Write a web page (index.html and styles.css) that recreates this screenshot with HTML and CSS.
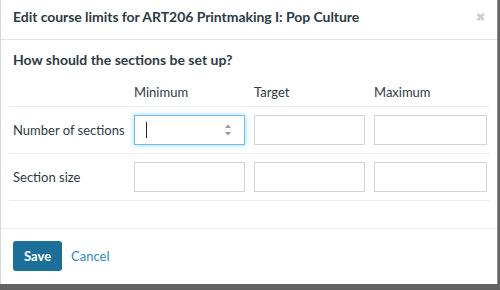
FILE: index.html
```html
<!DOCTYPE html>
<html lang="en">
<head>
    <meta charset="UTF-8">
    <meta name="viewport" content="width=device-width, initial-scale=1.0">
    <title>Edit course limits</title>
    <link rel="stylesheet" href="styles.css">
</head>
<body>
    <div class="modal">
        <div class="modal-header">
            <h2 class="modal-title">Edit course limits for ART206 Printmaking I: Pop Culture</h2>
            <span class="close">&#10006;</span>
        </div>
        <div class="modal-body">
            <h3 class="question">How should the sections be set up?</h3>
            <table class="limits">
                <thead>
                    <tr>
                        <th class="label-col"></th>
                        <th>Minimum</th>
                        <th>Target</th>
                        <th class="last">Maximum</th>
                    </tr>
                </thead>
                <tbody>
                    <tr>
                        <td class="label-col">Number of sections</td>
                        <td>
                            <div class="field focused">
                                <span class="caret"></span>
                                <svg class="spinner" viewBox="0 0 8 14" xmlns="http://www.w3.org/2000/svg">
                                    <path d="M1 5 L4 1.5 L7 5 Z"/>
                                    <path d="M1 9 L4 12.5 L7 9 Z"/>
                                </svg>
                            </div>
                        </td>
                        <td><div class="field"></div></td>
                        <td class="last"><div class="field"></div></td>
                    </tr>
                    <tr>
                        <td class="label-col">Section size</td>
                        <td><div class="field"></div></td>
                        <td><div class="field"></div></td>
                        <td class="last"><div class="field"></div></td>
                    </tr>
                </tbody>
            </table>
        </div>
        <div class="modal-footer">
            <button class="btn-save">Save</button>
            <a href="#" class="btn-cancel">Cancel</a>
        </div>
    </div>
</body>
</html>
```

FILE: styles.css
```css
body {
    margin: 0;
    font-family: 'Lato', 'Liberation Sans', sans-serif;
    background: #636363;
    color: #2d3b45;
    height: 290px;
}
.modal {
    width: 498px;
    height: 284px;
    background: #ffffff;
    border-left: 1px solid #d6d6d6;
    border-right: 1px solid #8e8e8e;
    box-sizing: border-box;
    display: flex;
    flex-direction: column;
}
.modal-header {
    display: flex;
    align-items: flex-start;
    justify-content: space-between;
    padding: 7px 12px 12px 12px;
    border-bottom: 1px solid #e2e2e2;
}
.modal-title {
    margin: 0;
    font-size: 14px;
    line-height: 20px;
    font-weight: 700;
    color: #2d3b45;
    letter-spacing: -0.05px;
}
.close {
    font-size: 11px;
    line-height: 20px;
    color: #cfcfcf;
    font-weight: 700;
}
.modal-body {
    padding: 10px 6px 0 8px;
    flex: 1;
}
.question {
    margin: 0 0 13px 4px;
    font-size: 14px;
    line-height: 20px;
    font-weight: 700;
    color: #2d3b45;
}
.limits {
    border-collapse: collapse;
    width: 481px;
    table-layout: fixed;
}
.limits th,
.limits td {
    box-sizing: border-box;
    width: 120px;
    font-size: 13px;
    text-align: left;
    border-bottom: 1px solid #ececec;
}
.limits th {
    line-height: 18px;
    font-weight: 400;
    padding: 0 0 5px 0;
}
.limits td {
    padding: 8px 9px 8px 0;
    vertical-align: middle;
}
.limits .label-col {
    width: 125px;
    padding-left: 4px;
    padding-right: 0;
}
.limits .last {
    width: 116px;
    padding-right: 3px;
}
.field {
    height: 30px;
    border: 1px solid #d4d4d4;
    box-sizing: border-box;
    background: #ffffff;
}
.field.focused {
    position: relative;
    border-color: #66c3ec;
    box-shadow: 0 0 5px rgba(102, 195, 236, 0.7);
}
.caret {
    position: absolute;
    left: 11px;
    top: 6px;
    width: 1px;
    height: 16px;
    background: #222222;
}
.spinner {
    position: absolute;
    right: 12px;
    top: 7px;
    width: 8px;
    height: 14px;
    fill: #9a9a9a;
}
.modal-footer {
    display: flex;
    align-items: center;
    gap: 9px;
    padding: 12px 12px 13px 12px;
    border-top: 1px solid #ececec;
}
.btn-save {
    height: 30px;
    padding: 0 11px;
    background: #1b6f99;
    color: #ffffff;
    border: none;
    border-radius: 3px;
    font-family: inherit;
    font-size: 13px;
    font-weight: 700;
}
.btn-cancel {
    color: #2b8ac4;
    font-size: 13px;
    text-decoration: none;
}
```
